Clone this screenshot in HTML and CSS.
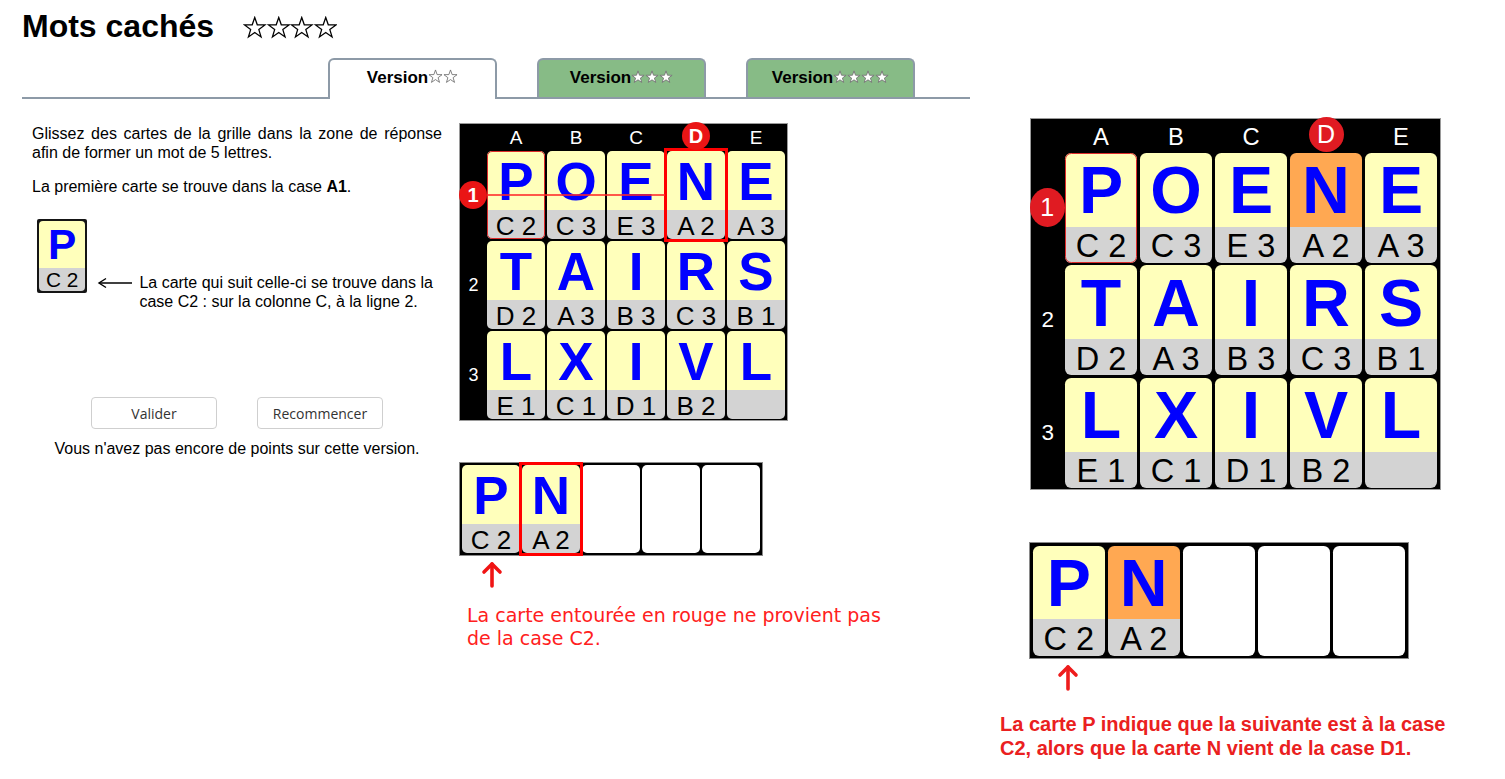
FILE: index.html
```html
<!DOCTYPE html>
<html lang="fr">
<head>
<meta charset="utf-8">
<title>Mots cachés</title>
<link rel="stylesheet" href="styles.css">
</head>
<body>
<div class="page">
  <div class="main">
    <div class="title-row">
      <h1>Mots cachés</h1>
      <span class="stars-big">
        <svg viewBox="0 0 24 24"><path d="M12 1.5L14.59 8.94L22.46 9.1L16.18 13.86L18.47 21.4L12 16.9L5.53 21.4L7.82 13.86L1.54 9.1L9.41 8.94Z"/></svg><svg viewBox="0 0 24 24"><path d="M12 1.5L14.59 8.94L22.46 9.1L16.18 13.86L18.47 21.4L12 16.9L5.53 21.4L7.82 13.86L1.54 9.1L9.41 8.94Z"/></svg><svg viewBox="0 0 24 24"><path d="M12 1.5L14.59 8.94L22.46 9.1L16.18 13.86L18.47 21.4L12 16.9L5.53 21.4L7.82 13.86L1.54 9.1L9.41 8.94Z"/></svg><svg viewBox="0 0 24 24"><path d="M12 1.5L14.59 8.94L22.46 9.1L16.18 13.86L18.47 21.4L12 16.9L5.53 21.4L7.82 13.86L1.54 9.1L9.41 8.94Z"/></svg>
      </span>
    </div>

    <div class="tabs">
      <div class="tab active">Version<span class="tstars"><svg viewBox="0 0 24 24"><path d="M12 1.5L14.59 8.94L22.46 9.1L16.18 13.86L18.47 21.4L12 16.9L5.53 21.4L7.82 13.86L1.54 9.1L9.41 8.94Z"/></svg><svg viewBox="0 0 24 24"><path d="M12 1.5L14.59 8.94L22.46 9.1L16.18 13.86L18.47 21.4L12 16.9L5.53 21.4L7.82 13.86L1.54 9.1L9.41 8.94Z"/></svg></span></div>
      <div class="tab done">Version<span class="tstars"><svg viewBox="0 0 24 24"><path d="M12 1.5L14.59 8.94L22.46 9.1L16.18 13.86L18.47 21.4L12 16.9L5.53 21.4L7.82 13.86L1.54 9.1L9.41 8.94Z"/></svg><svg viewBox="0 0 24 24"><path d="M12 1.5L14.59 8.94L22.46 9.1L16.18 13.86L18.47 21.4L12 16.9L5.53 21.4L7.82 13.86L1.54 9.1L9.41 8.94Z"/></svg><svg viewBox="0 0 24 24"><path d="M12 1.5L14.59 8.94L22.46 9.1L16.18 13.86L18.47 21.4L12 16.9L5.53 21.4L7.82 13.86L1.54 9.1L9.41 8.94Z"/></svg></span></div>
      <div class="tab done">Version<span class="tstars"><svg viewBox="0 0 24 24"><path d="M12 1.5L14.59 8.94L22.46 9.1L16.18 13.86L18.47 21.4L12 16.9L5.53 21.4L7.82 13.86L1.54 9.1L9.41 8.94Z"/></svg><svg viewBox="0 0 24 24"><path d="M12 1.5L14.59 8.94L22.46 9.1L16.18 13.86L18.47 21.4L12 16.9L5.53 21.4L7.82 13.86L1.54 9.1L9.41 8.94Z"/></svg><svg viewBox="0 0 24 24"><path d="M12 1.5L14.59 8.94L22.46 9.1L16.18 13.86L18.47 21.4L12 16.9L5.53 21.4L7.82 13.86L1.54 9.1L9.41 8.94Z"/></svg><svg viewBox="0 0 24 24"><path d="M12 1.5L14.59 8.94L22.46 9.1L16.18 13.86L18.47 21.4L12 16.9L5.53 21.4L7.82 13.86L1.54 9.1L9.41 8.94Z"/></svg></span></div>
    </div>

    <div class="content">
      <div class="instr">
        <p class="lead">Glissez des cartes de la grille dans la zone de réponse afin de former un mot de 5 lettres.</p>
        <p class="first">La première carte se trouve dans la case <b>A1</b>.</p>
        <div class="example">
          <div class="mini">
            <div class="card"><div class="l">P</div><div class="c">C 2</div></div>
          </div>
          <svg class="larrow" viewBox="0 0 36 12"><line x1="2" y1="6" x2="35" y2="6"/><polyline points="9,1.5 2,6 9,10.5"/></svg>
          <p class="note">La carte qui suit celle-ci se trouve dans la case C2 : sur la colonne C, à la ligne 2.</p>
        </div>
        <div class="buttons">
          <button class="btn">Valider</button>
          <button class="btn">Recommencer</button>
        </div>
        <p class="status">Vous n'avez pas encore de points sur cette version.</p>
      </div>

      <div class="game">
        <div class="board">
          <div class="ch"></div><div class="ch">A</div><div class="ch">B</div><div class="ch">C</div><div class="ch"></div><div class="ch">E</div>
          <div class="rh"></div>
          <div class="card start"><div class="l">P</div><div class="c">C 2</div></div>
          <div class="card"><div class="l">O</div><div class="c">C 3</div></div>
          <div class="card"><div class="l">E</div><div class="c">E 3</div></div>
          <div class="card boxed"><div class="l">N</div><div class="c">A 2</div></div>
          <div class="card"><div class="l">E</div><div class="c">A 3</div></div>
          <div class="rh">2</div>
          <div class="card"><div class="l">T</div><div class="c">D 2</div></div>
          <div class="card"><div class="l">A</div><div class="c">A 3</div></div>
          <div class="card"><div class="l">I</div><div class="c">B 3</div></div>
          <div class="card"><div class="l">R</div><div class="c">C 3</div></div>
          <div class="card"><div class="l">S</div><div class="c">B 1</div></div>
          <div class="rh">3</div>
          <div class="card"><div class="l">L</div><div class="c">E 1</div></div>
          <div class="card"><div class="l">X</div><div class="c">C 1</div></div>
          <div class="card"><div class="l">I</div><div class="c">D 1</div></div>
          <div class="card"><div class="l">V</div><div class="c">B 2</div></div>
          <div class="card"><div class="l">L</div><div class="c"></div></div>
          <div class="redline"></div>
          <div class="marker m1">1</div>
          <div class="marker mD">D</div>
        </div>

        <div class="answer">
          <div class="card"><div class="l">P</div><div class="c">C 2</div></div>
          <div class="card boxed"><div class="l">N</div><div class="c">A 2</div></div>
          <div class="slot"></div>
          <div class="slot"></div>
          <div class="slot"></div>
        </div>
        <svg class="uarrow" viewBox="0 0 22 27"><line x1="11" y1="3" x2="11" y2="25"/><polyline points="3,11 11,3 19,11"/></svg>
        <p class="err">La carte entourée en rouge ne provient pas de la case C2.</p>
      </div>
    </div>
  </div>

  <div class="aside">
    <div class="board big">
      <div class="ch"></div><div class="ch">A</div><div class="ch">B</div><div class="ch">C</div><div class="ch"></div><div class="ch">E</div>
      <div class="rh"></div>
      <div class="card start"><div class="l">P</div><div class="c">C 2</div></div>
      <div class="card"><div class="l">O</div><div class="c">C 3</div></div>
      <div class="card"><div class="l">E</div><div class="c">E 3</div></div>
      <div class="card hl"><div class="l">N</div><div class="c">A 2</div></div>
      <div class="card"><div class="l">E</div><div class="c">A 3</div></div>
      <div class="rh">2</div>
      <div class="card"><div class="l">T</div><div class="c">D 2</div></div>
      <div class="card"><div class="l">A</div><div class="c">A 3</div></div>
      <div class="card"><div class="l">I</div><div class="c">B 3</div></div>
      <div class="card"><div class="l">R</div><div class="c">C 3</div></div>
      <div class="card"><div class="l">S</div><div class="c">B 1</div></div>
      <div class="rh">3</div>
      <div class="card"><div class="l">L</div><div class="c">E 1</div></div>
      <div class="card"><div class="l">X</div><div class="c">C 1</div></div>
      <div class="card"><div class="l">I</div><div class="c">D 1</div></div>
      <div class="card"><div class="l">V</div><div class="c">B 2</div></div>
      <div class="card"><div class="l">L</div><div class="c"></div></div>
      <div class="marker m1">1</div>
      <div class="marker mD">D</div>
    </div>

    <div class="answer big">
      <div class="card"><div class="l">P</div><div class="c">C 2</div></div>
      <div class="card hl"><div class="l">N</div><div class="c">A 2</div></div>
      <div class="slot"></div>
      <div class="slot"></div>
      <div class="slot"></div>
    </div>
    <svg class="uarrow big-arrow" viewBox="0 0 22 27"><line x1="11" y1="3" x2="11" y2="25"/><polyline points="3,11 11,3 19,11"/></svg>
    <p class="explain">La carte P indique que la suivante est à la case C2, alors que la carte N vient de la case D1.</p>
  </div>
</div>
</body>
</html>
```

FILE: styles.css
```css
* { box-sizing: border-box; }

body {
  margin: 0;
  background: #fff;
  color: #000;
  font-family: "Liberation Sans", Arial, sans-serif;
}

.page {
  display: flex;
  align-items: flex-start;
}

.main {
  width: 948px;
  margin-left: 22px;
  padding-top: 8px;
  flex: none;
}

/* ---------- title ---------- */
.title-row {
  display: flex;
  align-items: flex-start;
  height: 36px;
}

h1 {
  margin: 0;
  font-size: 32px;
  line-height: 36px;
  font-weight: bold;
}

.stars-big {
  display: flex;
  margin-left: 29px;
  margin-top: 8px;
}

.stars-big svg {
  width: 23.5px;
  height: 23.5px;
}

.stars-big path {
  fill: #fff;
  stroke: #000;
  stroke-width: 1.3;
  stroke-linejoin: miter;
}

/* ---------- tabs ---------- */
.tabs {
  display: flex;
  gap: 40px;
  margin-top: 14px;
  padding-left: 306px;
  border-bottom: 2px solid #8d9aa7;
}

.tab {
  width: 169px;
  height: 39px;
  margin-bottom: -2px;
  border: 2px solid #8d9aa7;
  border-bottom: none;
  border-radius: 6px 6px 0 0;
  background: #87bb86;
  text-align: center;
  font-size: 17px;
  font-weight: bold;
  line-height: 20px;
  padding-top: 8px;
}

.tab.active {
  height: 41px;
  background: #fff;
}

.tstars {
  display: inline-flex;
  vertical-align: -1px;
}

.tstars svg {
  width: 14px;
  height: 14px;
}

.tstars path {
  fill: #fff;
  stroke: #777;
  stroke-width: 1.6;
}

.tab.active .tstars svg {
  width: 15px;
  height: 15px;
}

.tab.active .tstars path {
  stroke: #666;
  stroke-width: 1.3;
}

/* ---------- content ---------- */
.content {
  display: flex;
  align-items: flex-start;
  margin-top: 25px;
}

.instr {
  width: 410px;
  margin-left: 10px;
  font-size: 16px;
  line-height: 18.5px;
}

.instr p {
  margin: 0;
}

.lead {
  padding-top: 1px;
  text-align: justify;
}

.first {
  margin-top: 16px !important;
}

.example {
  display: flex;
  align-items: flex-start;
  margin-top: 22px;
}

.mini {
  --u: 0.8px;
  margin-left: 5px;
  padding: 2px;
  background: #151515;
  border-radius: 2px;
}

.larrow {
  width: 36px;
  height: 12px;
  margin-left: 10px;
  margin-top: 58px;
  flex: none;
}

.larrow line,
.larrow polyline {
  fill: none;
  stroke: #000;
  stroke-width: 1.4;
}

.note {
  width: 306px;
  margin-left: 6px !important;
  margin-top: 54px !important;
  line-height: 19px;
}

.buttons {
  display: flex;
  justify-content: center;
  gap: 40px;
  margin-top: 86px;
}

.btn {
  width: 126px;
  height: 32px;
  background: #fff;
  border: 1px solid #cfcfcf;
  border-radius: 4px;
  font-family: "Open Sans", "DejaVu Sans", sans-serif;
  font-size: 14px;
  color: #333;
  padding: 1px 0 0;
}

.status {
  margin-top: 11px !important;
  text-align: center;
}

.game {
  margin-left: 18px;
}

/* ---------- board & cards ---------- */
.board {
  --u: 1px;
  position: relative;
  display: grid;
  grid-template-columns: calc(25 * var(--u)) repeat(5, calc(58 * var(--u)));
  grid-template-rows: calc(25 * var(--u)) repeat(3, calc(88 * var(--u)));
  gap: calc(2 * var(--u));
  padding: 0 calc(2 * var(--u)) var(--u) 0;
  width: max-content;
  background: #000;
  box-shadow: 0 0 0 1px #9a9a9a;
}

.big {
  --u: 1.25px;
}

.ch {
  color: #fff;
  text-align: center;
  font-size: calc(19 * var(--u));
  line-height: calc(22 * var(--u));
  padding-top: calc(3 * var(--u));
}

.rh {
  color: #fff;
  font-size: calc(18 * var(--u));
  display: flex;
  align-items: center;
  justify-content: center;
  padding-left: calc(2 * var(--u));
}

.card {
  position: relative;
  width: calc(58 * var(--u));
  height: calc(88 * var(--u));
  border-radius: calc(5 * var(--u));
  display: flex;
  flex-direction: column;
}

.card .l {
  height: calc(59 * var(--u));
  padding-top: calc(2 * var(--u));
  border-radius: calc(5 * var(--u)) calc(5 * var(--u)) 0 0;
  background: #ffffbb;
  text-align: center;
  color: #0000ff;
  font-weight: bold;
  font-size: calc(53 * var(--u));
  line-height: calc(57 * var(--u));
}

.card .c {
  height: calc(29 * var(--u));
  border-radius: 0 0 calc(5 * var(--u)) calc(5 * var(--u));
  background: #d3d3d3;
  text-align: center;
  color: #000;
  font-size: calc(26 * var(--u));
  line-height: calc(26 * var(--u));
  padding-top: calc(3 * var(--u));
  white-space: nowrap;
}

.card.start::before {
  content: "";
  position: absolute;
  inset: 0;
  border: 1px solid #dd2b2b;
  border-radius: calc(5 * var(--u));
  z-index: 1;
}

.card.hl .l {
  background: #ffa852;
}

.card.boxed::after {
  content: "";
  position: absolute;
  inset: -3px;
  border: 3px solid #f00;
  z-index: 2;
}

.redline {
  position: absolute;
  left: calc(27 * var(--u));
  top: calc(70 * var(--u));
  width: calc(178 * var(--u));
  height: calc(2 * var(--u));
  background: rgba(255, 40, 40, 0.78);
  z-index: 3;
}

.marker {
  position: absolute;
  width: calc(28 * var(--u));
  height: calc(28 * var(--u));
  border-radius: 50%;
  background: #ea1515;
  color: #fff;
  text-align: center;
  font-weight: bold;
  font-size: calc(20 * var(--u));
  line-height: calc(28 * var(--u));
  z-index: 4;
}

.m1 {
  left: calc(-1 * var(--u));
  top: calc(57 * var(--u));
}

.mD {
  left: calc(222 * var(--u));
  top: calc(-2 * var(--u));
}

.big .marker {
  font-weight: normal;
  background: #e01b22;
}

.big .m1 {
  height: calc(31 * var(--u));
  line-height: calc(31 * var(--u));
  top: calc(55 * var(--u));
}

/* ---------- answer zone ---------- */
.answer {
  --u: 1px;
  display: flex;
  gap: calc(2 * var(--u));
  padding: calc(2 * var(--u));
  width: max-content;
  background: #000;
  margin-top: 43px;
  box-shadow: 0 0 0 1px #8a8a8a;
}

.answer.big {
  --u: 1.25px;
  margin-top: 54px;
  margin-left: 30px;
}

.slot {
  width: calc(58 * var(--u));
  height: calc(88 * var(--u));
  border-radius: calc(5 * var(--u));
  background: #fff;
}

.uarrow {
  display: block;
  width: 22px;
  height: 27px;
  margin-top: 6px;
  margin-left: 21px;
}

.uarrow line,
.uarrow polyline {
  fill: none;
  stroke: #f01414;
  stroke-width: 3.6;
  stroke-linecap: round;
  stroke-linejoin: round;
}

.err {
  width: 425px;
  margin: 16px 0 0 7px;
  color: #ff2020;
  font-family: "DejaVu Sans", Verdana, sans-serif;
  font-size: 19px;
  font-weight: normal;
  line-height: 23px;
}

/* ---------- aside ---------- */
.aside {
  width: 460px;
  margin-left: 30px;
  padding-top: 119px;
  flex: none;
}

.aside .board.big {
  margin-left: 31px;
}

.big-arrow {
  margin-left: 57px;
  margin-top: 6px;
}

.big-arrow line,
.big-arrow polyline {
  stroke: #ee1c1c;
}

.explain {
  width: 455px;
  margin: 21px 0 0 0;
  color: #ea2020;
  font-size: 20px;
  font-weight: bold;
  line-height: 24px;
}
```
